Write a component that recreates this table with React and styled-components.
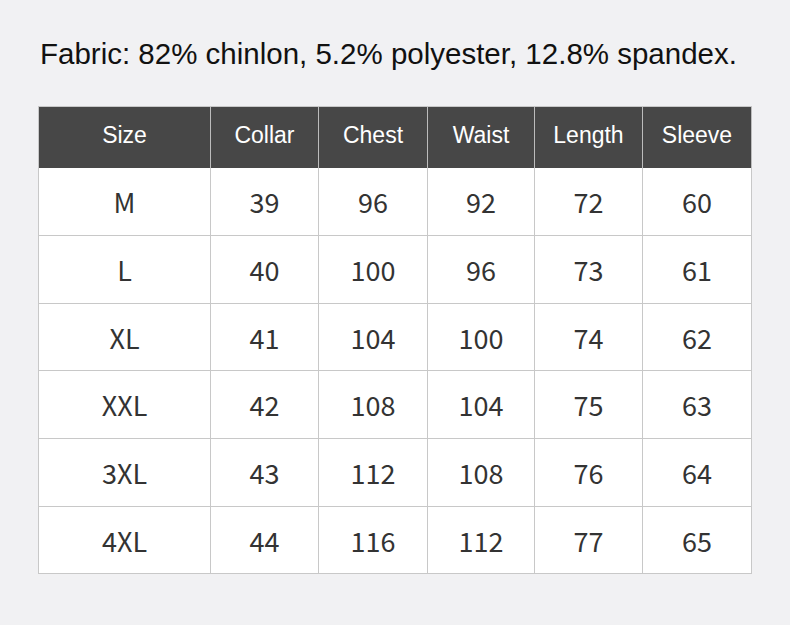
import styled, { createGlobalStyle } from "styled-components"

const GlobalStyle = createGlobalStyle`
  html, body {
    margin: 0;
    padding: 0;
    background: #f1f1f3;
  }
`

const Page = styled.div`
  width: 790px;
  height: 625px;
  background: #f1f1f3;
  padding: 39px 0 0 38px;
  box-sizing: border-box;
`

const Title = styled.div`
  font-family: "Liberation Sans", Arial, sans-serif;
  font-size: 29.5px;
  line-height: 30px;
  color: #111;
  padding-left: 2px;
  margin-bottom: 37px;
`

const Table = styled.div`
  width: 713px;
  display: grid;
  grid-template-columns: 172px 108px 109px 107px 108px 109px;
  border-left: 1px solid #c8c8c8;
  border-top: 1px solid #c8c8c8;
`

const HeadCell = styled.div`
  height: 61px;
  padding-bottom: 4px;
  display: flex;
  align-items: center;
  justify-content: center;
  background: #474747;
  color: #fff;
  font-family: "Liberation Sans", Arial, sans-serif;
  font-size: 23px;
  border-right: 1px solid #bcbcbc;
  box-sizing: border-box;
`

const Cell = styled.div`
  height: ${p => p.$h}px;
  display: flex;
  align-items: center;
  justify-content: center;
  background: #fff;
  color: #333;
  font-family: "Noto Sans CJK SC", "Noto Sans", sans-serif;
  font-size: 27px;
  border-right: 1px solid #c8c8c8;
  border-bottom: 1px solid #c8c8c8;
  box-sizing: border-box;
`

const HEADERS = ["Size", "Collar", "Chest", "Waist", "Length", "Sleeve"]

const ROWS = [
  ["M", 39, 96, 92, 72, 60],
  ["L", 40, 100, 96, 73, 61],
  ["XL", 41, 104, 100, 74, 62],
  ["XXL", 42, 108, 104, 75, 63],
  ["3XL", 43, 112, 108, 76, 64],
  ["4XL", 44, 116, 112, 77, 65],
]

const HEIGHTS = [68, 68, 67, 68, 68, 67]

const App = () => {
  return (
    <Page>
      <GlobalStyle />
      <Title>Fabric: 82% chinlon, 5.2% polyester, 12.8% spandex.</Title>
      <Table>
        {HEADERS.map(h => (
          <HeadCell key={h}>{h}</HeadCell>
        ))}
        {ROWS.map((row, r) =>
          row.map((v, c) => (
            <Cell key={`${r}-${c}`} $h={HEIGHTS[r]}>
              {v}
            </Cell>
          )),
        )}
      </Table>
    </Page>
  )
}

export default App
